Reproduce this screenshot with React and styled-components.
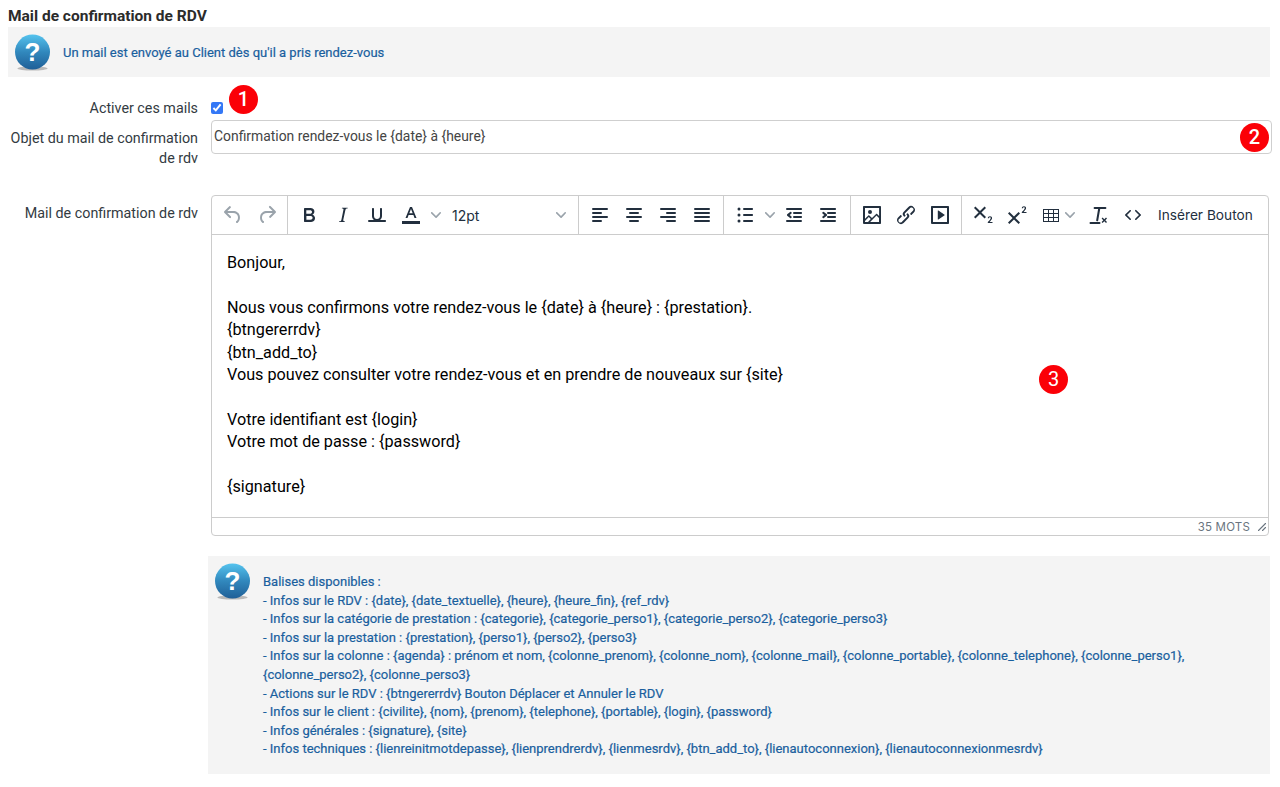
import React from 'react';
import styled, { createGlobalStyle } from 'styled-components';

const GlobalStyle = createGlobalStyle`
  html, body { margin: 0; padding: 0; background: #fff; }
  body { font-family: Roboto, "Liberation Sans", sans-serif; color: #212529; }
`;

const Page = styled.div`
  width: 1262px;
  padding: 8px 10px 13px 8px;
`;

const Title = styled.h1`
  margin: 0;
  height: 19px;
  font-size: 15.5px;
  line-height: 17px;
  font-weight: 700;
  color: #2b2b2b;
`;

const HelpBox = styled.div`
  display: flex;
  align-items: center;
  height: 50px;
  background: #f4f4f4;
  padding-left: 6px;
  gap: 12px;
  color: #1a5f9e;
  font-size: 13px;
  line-height: 18px;
  -webkit-text-stroke: 0.2px #1a5f9e;
  span { padding-top: 2px; }
`;

const FormRow = styled.div`
  display: grid;
  grid-template-columns: 190px 1fr;
  column-gap: 13px;
  height: ${p => p.$h}px;
`;

const Label = styled.label`
  text-align: right;
  font-size: 14.3px;
  line-height: 20px;
  color: #333b42;
  padding-top: ${p => p.$top || 0}px;
`;

const Field = styled.div`
  position: relative;
  min-width: 0;
`;

const Check = styled.input`
  margin: 25px 0 0 0;
  width: 12px;
  height: 12px;
  accent-color: #3478f6;
  display: block;
`;

const TextInput = styled.input`
  box-sizing: border-box;
  width: 1061px;
  height: 34px;
  margin-top: -1px;
  border: 1px solid #cfcfcf;
  border-radius: 4px;
  padding: 0 2px 2px;
  font: 13.9px Roboto, sans-serif;
  color: #444;
  outline: none;
  display: block;
`;

const Badge = styled.span`
  position: absolute;
  left: ${p => p.$x}px;
  top: ${p => p.$y}px;
  width: 29px;
  height: 29px;
  border-radius: 50%;
  background: #fb0007;
  color: #fff;
  font-size: 20px;
  font-weight: ${p => p.$w || 500};
  line-height: 29px;
  text-align: center;
`;

const Editor = styled.div`
  box-sizing: border-box;
  width: 1058px;
  height: 341px;
  border: 1px solid #cccccc;
  border-radius: 4px;
  display: flex;
  flex-direction: column;
  overflow: hidden;
`;

const Toolbar = styled.div`
  display: flex;
  height: 38px;
  flex: none;
  border-bottom: 1px solid #cccccc;
  box-sizing: content-box;
`;

const ToolGroup = styled.div`
  display: flex;
  align-items: center;
  width: ${p => p.$w}px;
  flex: none;
  box-sizing: border-box;
  padding-left: ${p => p.$pad || 4}px;
  border-right: ${p => (p.$last ? 'none' : '1px solid #cccccc')};
`;

const Tool = styled.span`
  display: flex;
  align-items: center;
  justify-content: center;
  width: ${p => p.$w || 34}px;
  height: 24px;
  flex: none;
  color: ${p => (p.$off ? '#9aa3ab' : '#222f3e')};
  svg { fill: currentColor; display: block; }
`;

const Caret = styled.svg`
  fill: #9aa3ab;
  flex: none;
  display: block;
  margin-left: ${p => p.$ml || 0}px;
  margin-right: ${p => p.$mr || 0}px;
`;

const SizeSelect = styled.span`
  display: flex;
  align-items: center;
  justify-content: space-between;
  width: 114px;
  margin-left: 11px;
  font: 14px Inter, sans-serif;
  color: #222f3e;
`;

const TextButton = styled.span`
  font: 13.7px Inter, sans-serif;
  color: #222f3e;
  margin-left: 8px;
  white-space: nowrap;
`;

const Body = styled.div`
  flex: 1;
  padding: 17px 15px 0 15px;
  font-size: 16.2px;
  line-height: 22.4px;
  color: #000;
`;

const Line = styled.div`
  min-height: 22.4px;
`;

const StatusBar = styled.div`
  flex: none;
  height: 17px;
  border-top: 1px solid #cccccc;
  display: flex;
  align-items: center;
  justify-content: flex-end;
  font: 11.5px Inter, sans-serif;
  letter-spacing: 0.2px;
  color: #6a7580;
  padding-right: 1px;
  gap: 7px;
`;

const TagsBox = styled.div`
  display: flex;
  margin: 20px 0 0 200px;
  height: 218px;
  background: #f4f4f4;
  padding-left: 6px;
  box-sizing: border-box;
  gap: 12px;
  color: #1a5f9e;
  font-size: 13px;
  line-height: 18.6px;
  -webkit-text-stroke: 0.2px #1a5f9e;
`;

const TagsIcon = styled.div`
  padding-top: 7px;
  flex: none;
`;

const TagsText = styled.div`
  padding-top: 17px;
  width: 945px;
`;

const HelpIcon = () => (
  <svg width="37" height="37" viewBox="0 0 37 37">
    <defs>
      <linearGradient id="hg" x1="0" y1="0" x2="0" y2="1">
        <stop offset="0" stopColor="#55c3ee" />
        <stop offset="0.5" stopColor="#3188bd" />
        <stop offset="1" stopColor="#1f5f97" />
      </linearGradient>
    </defs>
    <ellipse cx="18.5" cy="34.5" rx="15" ry="2" fill="#b9b9b9" />
    <circle cx="18.5" cy="18" r="17.5" fill="url(#hg)" />
    <text x="18.5" y="27" textAnchor="middle" fontFamily="Liberation Sans" fontWeight="700" fontSize="26" stroke="none" fill="#fff">?</text>
  </svg>
);

const Icon = ({ d, size = 24 }) => (
  <svg width={size} height={size} viewBox="0 0 24 24"><path d={d} /></svg>
);

const Chevron = ({ ml, mr }) => (
  <Caret $ml={ml} $mr={mr} width="10" height="10" viewBox="0 0 10 10">
    <path d="M8.7 2.2c.3-.3.8-.3 1 0 .4.4.4.9 0 1.2L5.7 7.8c-.3.3-.9.3-1.2 0L.2 3.4a.8.8 0 0 1 0-1.2c.3-.3.8-.3 1.1 0L5 6l3.7-3.8z" />
  </Caret>
);

// alignment icons: four bars, [x, width]
const Bars = ({ rows }) => (
  <svg width="24" height="24" viewBox="0 0 24 24">
    {rows.map((r, i) => (
      <rect key={i} x={r[0]} y={5 + i * 4} width={r[1]} height="2" rx="1" />
    ))}
  </svg>
);

const paths = {
  undo: 'M6.4 8H12c3.7 0 6.2 2 6.8 5.1.6 2.7-.4 5.6-2.3 6.8a1 1 0 0 1-1-1.8c1.1-.6 1.8-2.7 1.4-4.6-.5-2.1-2.1-3.5-4.9-3.5H6.4l3.3 3.3a1 1 0 1 1-1.4 1.4l-5-5a1 1 0 0 1 0-1.4l5-5a1 1 0 0 1 1.4 1.4L6.4 8z',
  redo: 'M17.6 10H12c-2.8 0-4.4 1.4-4.9 3.5-.4 2 .3 4 1.4 4.6a1 1 0 1 1-1 1.8c-2-1.2-2.9-4.1-2.3-6.8.6-3 3-5.1 6.8-5.1h5.6l-3.3-3.3a1 1 0 1 1 1.4-1.4l5 5a1 1 0 0 1 0 1.4l-5 5a1 1 0 0 1-1.4-1.4l3.3-3.3z',
  bold: 'M7.8 19c-.3 0-.5 0-.6-.2l-.2-.5V5.7c0-.2 0-.4.2-.5l.6-.2h5c1.5 0 2.7.3 3.5 1 .7.6 1.1 1.4 1.1 2.5a3 3 0 0 1-.6 1.9c-.4.6-1 1-1.6 1.2.4.1.9.3 1.3.6s.8.7 1 1.2c.4.4.5 1 .5 1.6 0 1.3-.4 2.3-1.3 3-.8.7-2.1 1-3.8 1H7.8zm5-8.3c.6 0 1.2-.1 1.6-.5.4-.3.6-.7.6-1.3 0-1.1-.8-1.7-2.3-1.7H9.3v3.5h3.4zm.5 6c.7 0 1.3-.1 1.7-.4.4-.4.6-.9.6-1.5s-.2-1-.7-1.4c-.4-.3-1-.4-2-.4H9.4v3.8h4z',
  italic: 'M16.7 4.7l-.1.9h-.3c-.6 0-1 0-1.4.3-.3.3-.4.6-.5 1.1l-2.1 9.8v.6c0 .5.4.8 1.4.8h.2l-.2.8H8l.2-.8h.2c1.1 0 1.8-.5 2-1.5l2-9.8.1-.5c0-.6-.4-.8-1.4-.8h-.3l.2-.9h5.8z',
  underline: 'M16 5c.6 0 1 .4 1 1v7c0 2.8-2.2 5-5 5s-5-2.2-5-5V6c0-.6.4-1 1-1s1 .4 1 1v7c0 1.7 1.3 3 3 3s3-1.3 3-3V6c0-.6.4-1 1-1zM4 17h16c.6 0 1 .4 1 1s-.4 1-1 1H4a1 1 0 1 1 0-2z',
  textColor: 'M3 18h18v3H3zM11 4h2l4.5 11h-2l-1.1-3H9.6l-1.1 3h-2L11 4zm-.7 6.3h3.4L12 5.9l-1.7 4.4z',
  bullets: 'M11 5h8c.6 0 1 .4 1 1s-.4 1-1 1h-8a1 1 0 0 1 0-2zm0 6h8c.6 0 1 .4 1 1s-.4 1-1 1h-8a1 1 0 0 1 0-2zm0 6h8c.6 0 1 .4 1 1s-.4 1-1 1h-8a1 1 0 0 1 0-2zM6 4.5a1.5 1.5 0 1 1 0 3 1.5 1.5 0 0 1 0-3zm0 6a1.5 1.5 0 1 1 0 3 1.5 1.5 0 0 1 0-3zm0 6a1.5 1.5 0 1 1 0 3 1.5 1.5 0 0 1 0-3z',
  outdent: 'M5 5h14c.6 0 1 .4 1 1s-.4 1-1 1H5a1 1 0 1 1 0-2zm7 4h7c.6 0 1 .4 1 1s-.4 1-1 1h-7a1 1 0 0 1 0-2zm0 4h7c.6 0 1 .4 1 1s-.4 1-1 1h-7a1 1 0 0 1 0-2zm-7 4h14a1 1 0 0 1 0 2H5a1 1 0 0 1 0-2zm2.600-5l1.700 1.300a1 1 0 0 1-1.200 1.600l-2.900-2.200a1 1 0 0 1 0-1.400l2.900-2.200a1 1 0 0 1 1.200 1.600L7.600 12z',
  indent: 'M5 5h14c.6 0 1 .4 1 1s-.4 1-1 1H5a1 1 0 1 1 0-2zm7 4h7c.6 0 1 .4 1 1s-.4 1-1 1h-7a1 1 0 0 1 0-2zm0 4h7c.6 0 1 .4 1 1s-.4 1-1 1h-7a1 1 0 0 1 0-2zm-7 4h14a1 1 0 0 1 0 2H5a1 1 0 0 1 0-2zm3.400-5L6.700 10.700a1 1 0 0 1 1.200-1.600l2.900 2.200a1 1 0 0 1 0 1.400l-2.900 2.200a1 1 0 0 1-1.200-1.600L8.400 12z',
  image: 'M5 15.7l3.3-3.2c.3-.3.7-.3 1 0L12 15l4.1-4c.3-.4.8-.4 1 0l2 1.9V5H5v10.7zM5 18V19h3l2.8-2.9-2-2L5 17.9zm14-3l-2.5-2.4-6.4 6.5H19v-4zM4 3h16c.6 0 1 .4 1 1v16c0 .6-.4 1-1 1H4a1 1 0 0 1-1-1V4c0-.6.4-1 1-1zm6 8a2 2 0 1 0 0-4 2 2 0 0 0 0 4z',
  link: 'M6.2 12.3a1 1 0 0 1 1.4 1.4l-2.1 2.1a2 2 0 1 0 2.7 2.7l4.8-4.8a1 1 0 0 0 0-1.4 1 1 0 1 1 1.4-1.3 2.9 2.9 0 0 1 0 4L9.6 20a3.9 3.9 0 0 1-5.5-5.5l2-2zm11.6-.6a1 1 0 0 1-1.4-1.4l2-2a2 2 0 1 0-2.6-2.8L11 10.3a1 1 0 0 0 0 1.4A1 1 0 1 1 9.6 13a2.9 2.9 0 0 1 0-4L14.4 4a3.9 3.9 0 0 1 5.5 5.5l-2 2z',
  media: 'M4 3h16c.6 0 1 .4 1 1v16c0 .6-.4 1-1 1H4a1 1 0 0 1-1-1V4c0-.6.4-1 1-1zm1 2v14h14V5H5zm4.800 2.800c0-.3.3-.4.6-.3l6.200 4.200c.2.2.2.5 0 .6l-6.200 4.200c-.3.2-.6 0-.6-.3V7.800z',
  sub: 'M10.400 9.500l4.600 4.600-1.400 1.400L9 10.900l-4.600 4.600L3 14.100l4.600-4.600L3 4.900l1.400-1.400L9 8.100l4.600-4.600L15 4.900l-4.600 4.600zM21.500 20h-4.700v-.9l2-2.200c.6-.7 1-1.300 1-1.800 0-.5-.3-.8-.8-.8-.6 0-1 .4-1 1h-1.200c0-1.200.9-2 2.200-2 1.300 0 2.100.7 2.100 1.700 0 .8-.4 1.500-1.300 2.500l-1.100 1.400h2.800V20z',
  sup: 'M15 10.400L10.400 15l4.600 4.600-1.400 1.400L9 16.400 4.400 21 3 19.600 7.600 15 3 10.400 4.400 9 9 13.600 13.600 9 15 10.400zM21.500 10h-4.700v-.9l2-2.200c.6-.7 1-1.300 1-1.800 0-.5-.3-.8-.8-.8-.6 0-1 .4-1 1h-1.200c0-1.200.9-2 2.200-2 1.300 0 2.100.7 2.100 1.700 0 .8-.4 1.500-1.300 2.500l-1.100 1.400h2.800V10z',
  table: 'M4 6h16v1H4zM4 10h16v1H4zM4 14h16v1H4zM4 18h16v1H4zM4 6h1v13H4zM9 6h1v13H9zM14 6h1v13h-1zM19 6h1v13h-1z',
  clear: 'M13.200 6l-2 11.500a1 1 0 0 1-2-.3L11.100 6H7.600a1 1 0 1 1 0-2h10.800a1 1 0 0 1 0 2h-5.200zM3.500 19h9a1 1 0 0 1 0 2h-9a1 1 0 0 1 0-2zm13.800-2.700l1.700-1.700 1 1-1.700 1.700 1.700 1.700-1 1-1.700-1.700-1.700 1.700-1-1 1.700-1.700-1.700-1.700 1-1 1.700 1.700z',
  code: 'M9.800 15.700c.3.3.3.8 0 1-.3.400-.9.400-1.200 0l-4.400-4.100a.8.8 0 0 1 0-1.200l4.400-4.200c.3-.3.9-.3 1.200 0 .3.3.3.8 0 1.100L6 12l3.800 3.700zM14.200 15.700c-.3.3-.3.8 0 1 .4.400.9.400 1.200 0l4.400-4.100c.3-.3.3-.9 0-1.200l-4.400-4.200a.8.8 0 0 0-1.200 0c-.3.3-.3.8 0 1.100L18 12l-3.800 3.700z',
};

const bodyLines = [
  'Bonjour,',
  '',
  'Nous vous confirmons votre rendez-vous le {date} à {heure} : {prestation}.',
  '{btngererrdv}',
  '{btn_add_to}',
  'Vous pouvez consulter votre rendez-vous et en prendre de nouveaux sur {site}',
  '',
  'Votre identifiant est {login}',
  'Votre mot de passe : {password}',
  '',
  '{signature}',
];

const tagLines = [
  'Balises disponibles :',
  '- Infos sur le RDV : {date}, {date_textuelle}, {heure}, {heure_fin}, {ref_rdv}',
  '- Infos sur la catégorie de prestation : {categorie}, {categorie_perso1}, {categorie_perso2}, {categorie_perso3}',
  '- Infos sur la prestation : {prestation}, {perso1}, {perso2}, {perso3}',
  '- Infos sur la colonne : {agenda} : prénom et nom, {colonne_prenom}, {colonne_nom}, {colonne_mail}, {colonne_portable}, {colonne_telephone}, {colonne_perso1}, {colonne_perso2}, {colonne_perso3}',
  '- Actions sur le RDV : {btngererrdv} Bouton Déplacer et Annuler le RDV',
  '- Infos sur le client : {civilite}, {nom}, {prenom}, {telephone}, {portable}, {login}, {password}',
  '- Infos générales : {signature}, {site}',
  '- Infos techniques : {lienreinitmotdepasse}, {lienprendrerdv}, {lienmesrdv}, {btn_add_to}, {lienautoconnexion}, {lienautoconnexionmesrdv}',
];

export default function App() {
  return (
    <Page>
      <GlobalStyle />
      <Title>Mail de confirmation de RDV</Title>
      <HelpBox>
        <HelpIcon />
        <span>Un mail est envoyé au Client dès qu'il a pris rendez-vous</span>
      </HelpBox>

      <FormRow $h={44}>
        <Label $top={21}>Activer ces mails</Label>
        <Field>
          <Check type="checkbox" defaultChecked readOnly />
          <Badge $x={18} $y={8}>1</Badge>
        </Field>
      </FormRow>

      <FormRow $h={74}>
        <Label $top={7}>Objet du mail de confirmation de rdv</Label>
        <Field>
          <TextInput defaultValue="Confirmation rendez-vous le {date} à {heure}" />
          <Badge $x={1029} $y={2}>2</Badge>
        </Field>
      </FormRow>

      <FormRow $h={341}>
        <Label $top={8}>Mail de confirmation de rdv</Label>
        <Field>
          <Editor>
            <Toolbar>
              <ToolGroup $w={76}>
                <Tool $off><Icon d={paths.undo} /></Tool>
                <Tool $off><Icon d={paths.redo} /></Tool>
              </ToolGroup>
              <ToolGroup $w={291}>
                <Tool><Icon d={paths.bold} /></Tool>
                <Tool><Icon d={paths.italic} /></Tool>
                <Tool><Icon d={paths.underline} /></Tool>
                <Tool><Icon d={paths.textColor} /></Tool>
                <Chevron ml={3} />
                <SizeSelect>12pt<Chevron /></SizeSelect>
              </ToolGroup>
              <ToolGroup $w={145}>
                <Tool><Bars rows={[[4, 16], [4, 10], [4, 16], [4, 10]]} /></Tool>
                <Tool><Bars rows={[[4, 16], [7, 10], [4, 16], [7, 10]]} /></Tool>
                <Tool><Bars rows={[[4, 16], [10, 10], [4, 16], [10, 10]]} /></Tool>
                <Tool><Bars rows={[[4, 16], [4, 16], [4, 16], [4, 16]]} /></Tool>
              </ToolGroup>
              <ToolGroup $w={127}>
                <Tool><Icon d={paths.bullets} /></Tool>
                <Chevron ml={3} mr={2} />
                <Tool><Icon d={paths.outdent} /></Tool>
                <Tool><Icon d={paths.indent} /></Tool>
              </ToolGroup>
              <ToolGroup $w={111}>
                <Tool><Icon d={paths.image} /></Tool>
                <Tool><Icon d={paths.link} /></Tool>
                <Tool><Icon d={paths.media} /></Tool>
              </ToolGroup>
              <ToolGroup $last $w={300}>
                <Tool><Icon d={paths.sub} /></Tool>
                <Tool><Icon d={paths.sup} /></Tool>
                <Tool><Icon d={paths.table} /></Tool>
                <Chevron ml={-3} mr={7} />
                <Tool><Icon d={paths.clear} /></Tool>
                <Tool><Icon d={paths.code} /></Tool>
                <TextButton>Insérer Bouton</TextButton>
              </ToolGroup>
            </Toolbar>
            <Body>
              {bodyLines.map((l, i) => <Line key={i}>{l}</Line>)}
            </Body>
            <StatusBar>
              <span>35 MOTS</span>
              <svg width="10" height="10" viewBox="0 0 10 10" fill="#6a7580">
                <path d="M8.100 1.100A.5.5 0 1 1 8.900 1.900L1.900 8.900A.5.5 0 1 1 1.100 8.100L8.100 1.100zM8.100 5.100A.5.5 0 1 1 8.900 5.900L5.900 8.900A.5.5 0 1 1 5.100 8.100L8.100 5.100z" />
              </svg>
            </StatusBar>
          </Editor>
          <Badge $x={828} $y={170} $w={400}>3</Badge>
        </Field>
      </FormRow>

      <TagsBox>
        <TagsIcon><HelpIcon /></TagsIcon>
        <TagsText>
          {tagLines.map((l, i) => <div key={i}>{l}</div>)}
        </TagsText>
      </TagsBox>
    </Page>
  );
}
